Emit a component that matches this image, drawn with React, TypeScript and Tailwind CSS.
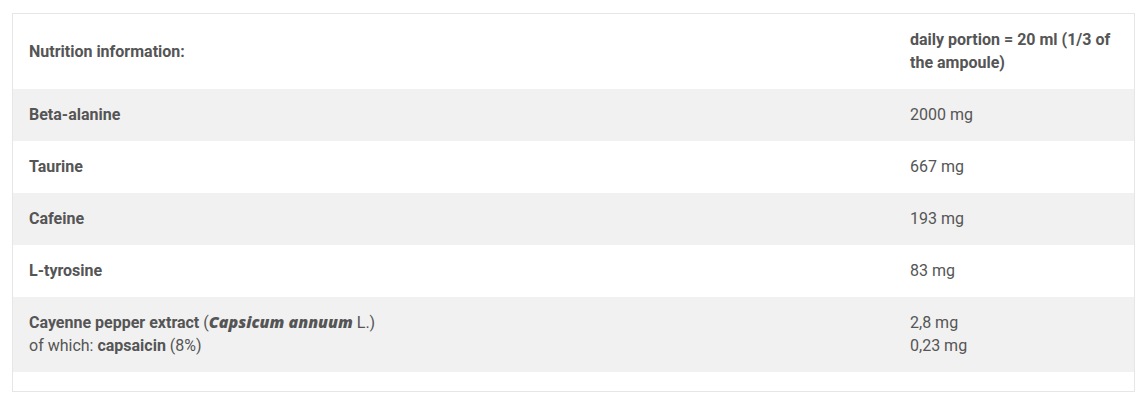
import React from "react";

type Row = {
  label: React.ReactNode;
  value: React.ReactNode;
};

const rows: Row[] = [
  { label: <strong className="font-bold">Beta-alanine</strong>, value: "2000 mg" },
  { label: <strong className="font-bold">Taurine</strong>, value: "667 mg" },
  { label: <strong className="font-bold">Cafeine</strong>, value: "193 mg" },
  { label: <strong className="font-bold">L-tyrosine</strong>, value: "83 mg" },
  {
    label: (
      <>
        <strong className="font-bold">Cayenne pepper extract</strong> (
        <em className="font-['Open_Sans',sans-serif] font-extrabold italic">Capsicum annuum</em> L.)
        <br />
        of which: <strong className="font-bold">capsaicin</strong> (8%)
      </>
    ),
    value: (
      <>
        2,8 mg
        <br />
        0,23 mg
      </>
    ),
  },
];

export default function App() {
  return (
    <div className="bg-white w-[1146px] h-[404px] pl-3 pt-[13px] font-['Roboto',sans-serif] text-[16px] leading-[23px] text-[#555555]">
      <div className="w-[1123px] border border-[#e6e6e6] pb-[19px]">
        <div className="grid grid-cols-[881px_1fr]">
          <div className="flex items-center px-4 pt-[14px] pb-[15px] font-bold">Nutrition information:</div>
          <div className="px-4 pt-[14px] pb-[15px] font-bold">daily portion = 20 ml (1/3 of the ampoule)</div>
          {rows.map((row, i) => {
            const bg = i % 2 === 0 ? "bg-[#f1f1f1]" : "bg-white";
            return (
              <React.Fragment key={i}>
                <div className={`${bg} px-4 pt-[14px] pb-[15px]`}>{row.label}</div>
                <div className={`${bg} px-4 pt-[14px] pb-[15px]`}>{row.value}</div>
              </React.Fragment>
            );
          })}
        </div>
      </div>
    </div>
  );
}
